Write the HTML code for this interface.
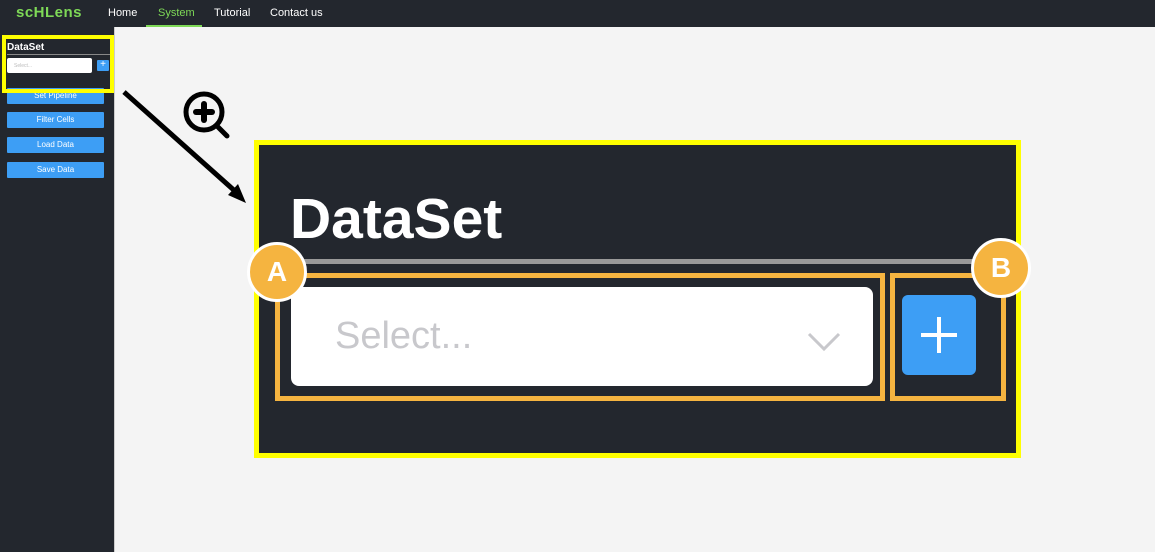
<!DOCTYPE html>
<html><head><style>
*{margin:0;padding:0;box-sizing:border-box}
body{width:1155px;height:552px;background:#f4f4f4;font-family:"Liberation Sans",sans-serif;position:relative;overflow:hidden}
.a{position:absolute}
.nav{left:0;top:0;width:1155px;height:27px;background:#23272e}
.nav span{position:absolute;top:7px;font-size:11px;color:#fff}
.side{left:0;top:27px;width:115px;height:525px;background:#23272e;border-right:1px solid #ccc}
.btn{position:absolute;left:7px;width:97px;height:16px;background:#3d9ef5;color:#fff;font-size:8px;text-align:center;line-height:16px;border-radius:1px}
.circ{width:60px;height:60px;border-radius:50%;background:#f5b440;border:3px solid #fff;color:#fff;font-size:28px;font-weight:bold;text-align:center;line-height:54px}
</style></head><body>
<div class="a nav">
<span style="left:16px;top:4px;font-size:15px;font-weight:bold;color:#7ed957;letter-spacing:0.5px">scHLens</span>
<span style="left:108px">Home</span>
<span style="left:158px;color:#7ed957">System</span>
<span style="left:214px">Tutorial</span>
<span style="left:270px">Contact us</span>
<div class="a" style="left:146px;top:25px;width:56px;height:2px;background:#7ed957"></div>
</div>
<div class="a side"></div>
<div class="a" style="left:7px;top:42px;color:#fff;font-size:10px;font-weight:bold">DataSet</div>
<div class="a" style="left:7px;top:54px;width:103px;height:1px;background:#888"></div>
<div class="a" style="left:7px;top:58px;width:85px;height:15px;background:#fff;border-radius:2px;font-size:5px;color:#bbb;padding:5px 7px">Select...</div>
<div class="a" style="left:97px;top:60px;width:12px;height:11px;background:#3d9ef5;color:#fff;font-size:10px;line-height:10px;text-align:center;border-radius:1px">+</div>
<div class="btn" style="top:88px">Set Pipeline</div>
<div class="btn" style="top:112px">Filter Cells</div>
<div class="btn" style="top:137px">Load Data</div>
<div class="btn" style="top:162px">Save Data</div>
<div class="a" style="left:2px;top:35px;width:112px;height:58px;border:4px solid #ffff00"></div>
<svg class="a" style="left:0;top:0" width="1155" height="552">
<line x1="124" y1="92" x2="236" y2="192" stroke="#000" stroke-width="5"/>
<polygon points="246,203 228,195 238,184" fill="#000"/>
<circle cx="204" cy="112" r="18" fill="none" stroke="#000" stroke-width="5"/>
<line x1="217" y1="126" x2="227" y2="136" stroke="#000" stroke-width="5" stroke-linecap="round"/>
<line x1="196" y1="112" x2="212" y2="112" stroke="#000" stroke-width="6" stroke-linecap="round"/>
<line x1="204" y1="104" x2="204" y2="120" stroke="#000" stroke-width="6" stroke-linecap="round"/>
</svg>
<div class="a" style="left:254px;top:140px;width:767px;height:318px;background:#23272e;border:5px solid #ffff00"></div>
<div class="a" style="left:290px;top:186px;color:#fff;font-size:57px;font-weight:bold">DataSet</div>
<div class="a" style="left:290px;top:259px;width:716px;height:5px;background:#999"></div>
<div class="a" style="left:291px;top:287px;width:582px;height:99px;background:#fff;border-radius:8px;font-size:38px;color:#c8c8cc;padding:28px 44px">Select...</div>
<svg class="a" style="left:806px;top:330px" width="36" height="24"><polyline points="3,4 18,19 33,4" fill="none" stroke="#c8c8cc" stroke-width="3"/></svg>
<div class="a" style="left:902px;top:295px;width:74px;height:80px;background:#3d9ef5;border-radius:6px"></div>
<svg class="a" style="left:902px;top:295px" width="74" height="80"><path d="M37 22V58M19 40H55" stroke="#fff" stroke-width="4"/></svg>
<div class="a" style="left:275px;top:273px;width:610px;height:128px;border:5px solid #f5b440"></div>
<div class="a" style="left:890px;top:273px;width:116px;height:128px;border:5px solid #f5b440"></div>
<div class="a circ" style="left:247px;top:242px">A</div>
<div class="a circ" style="left:971px;top:238px">B</div>
</body></html>
